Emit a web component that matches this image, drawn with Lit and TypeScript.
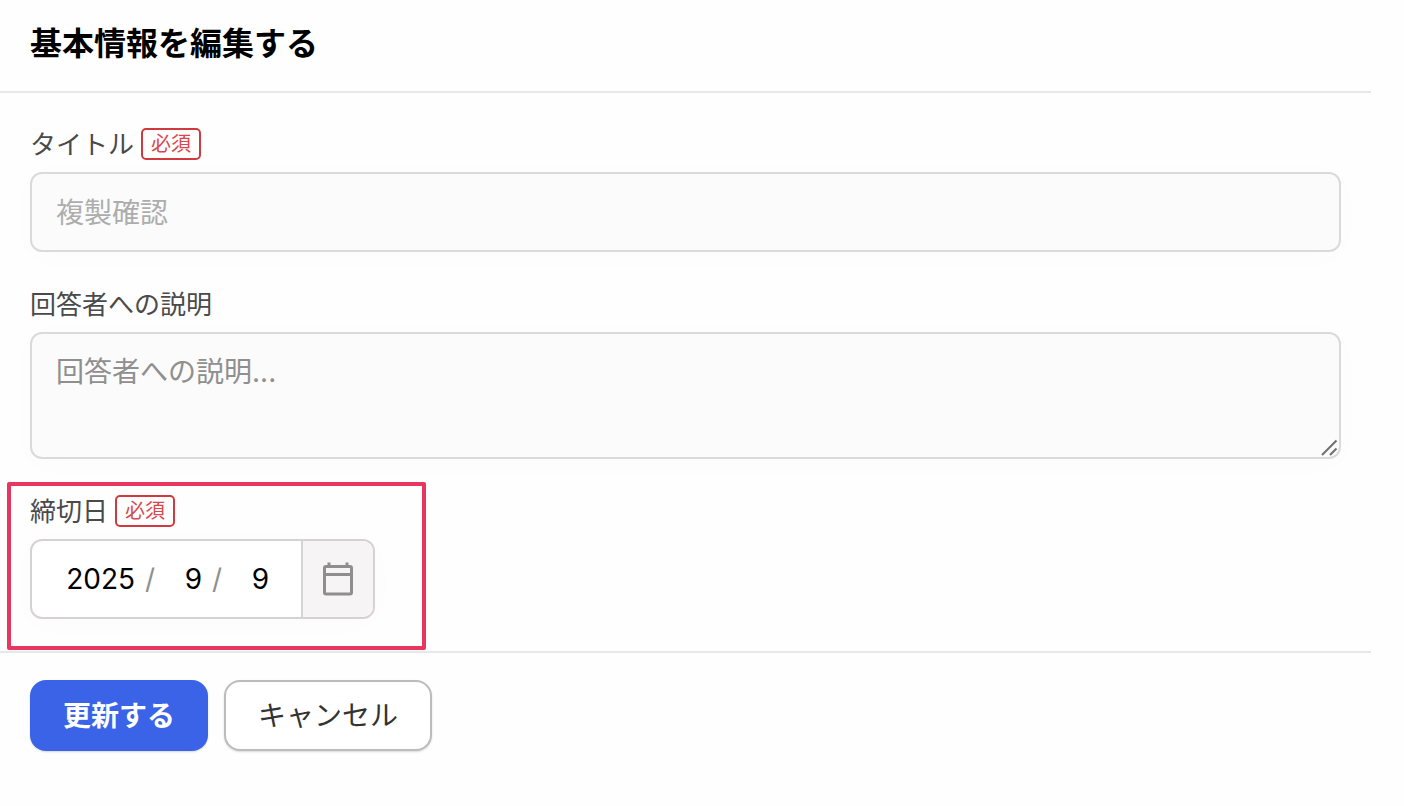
import { LitElement, html, css } from "lit";
import { customElement } from "lit/decorators.js";

@customElement("app-root")
export class AppRoot extends LitElement {
  static styles = css`
    :host {
      display: block;
      min-height: 100vh;
      background: #fefefe;
      color: #000;
      font-family: Inter, "Noto Sans CJK JP", sans-serif;
    }
    * {
      box-sizing: border-box;
    }
    .panel {
      margin-right: 33px;
    }
    .header {
      padding: 20px 30px 23px;
      border-bottom: 2px solid #e8e8e8;
    }
    .heading {
      margin: 0;
      font-size: 32px;
      line-height: 48px;
      font-weight: 700;
    }
    .fields {
      display: flex;
      flex-direction: column;
      gap: 36px;
      padding: 35px 30px 32px;
      border-bottom: 2px solid #e8e8e8;
    }
    .field {
      display: flex;
      flex-direction: column;
      gap: 12px;
      position: relative;
    }
    .label-row {
      display: flex;
      align-items: center;
      gap: 7px;
      height: 32px;
    }
    .label {
      padding-top: 2px;
      font-size: 26px;
      line-height: 32px;
      color: #4a4a4a;
    }
    .required {
      padding: 0 8px;
      border: 2px solid #d0393e;
      border-radius: 5px;
      font-size: 20px;
      line-height: 28px;
      color: #d9484c;
    }
    .control {
      display: block;
      width: 100%;
      margin: 0;
      border: 2px solid #dadada;
      border-radius: 12px;
      background: #fbfbfb;
      box-shadow: 0 4px 32px rgba(0, 0, 0, 0.016);
      font: inherit;
      font-size: 28px;
      line-height: 40px;
      outline: none;
    }
    .text {
      height: 80px;
      padding: 17px 24px 19px;
      color: #adadad;
    }
    .area-wrap {
      position: relative;
    }
    .area {
      height: 127px;
      padding: 18px 24px;
      resize: none;
    }
    .area::placeholder {
      color: #8f8f8f;
      opacity: 1;
    }
    .grip {
      position: absolute;
      right: 2px;
      bottom: 2px;
      width: 18px;
      height: 18px;
      pointer-events: none;
    }
    .date {
      display: flex;
      align-self: flex-start;
      height: 80px;
      border: 2px solid #d6d2d3;
      border-radius: 12px;
      background: #fff;
      box-shadow: 0 4px 32px rgba(0, 0, 0, 0.016);
      overflow: hidden;
    }
    .parts {
      display: flex;
      align-items: center;
      padding: 0 32px 0 24px;
      font-size: 28px;
      line-height: 40px;
    }
    .part {
      padding: 0;
      border: 0;
      background: none;
      font: inherit;
      color: #000;
      text-align: right;
      outline: none;
    }
    .year {
      width: 79px;
    }
    .short {
      width: 46px;
    }
    .slash {
      width: 21px;
      padding-left: 10px;
      color: #8f8f8f;
    }
    .picker {
      display: flex;
      align-items: center;
      justify-content: center;
      width: 72px;
      padding: 0;
      border: 0;
      border-left: 2px solid #d6d2d3;
      background: #f6f4f5;
    }
    .calendar {
      width: 32px;
      height: 36px;
    }
    .highlight {
      position: absolute;
      top: -13px;
      left: -23px;
      width: 419px;
      height: 168px;
      border: 4px solid #e8365f;
      border-radius: 2px;
      pointer-events: none;
    }
    .actions {
      display: flex;
      gap: 16px;
      padding: 27px 30px;
    }
    .button {
      height: 71px;
      border-radius: 16px;
      font: inherit;
      font-size: 28px;
      line-height: 40px;
    }
    .primary {
      padding: 0 33px;
      border: 0;
      background: #3a63e8;
      color: #fff;
      font-weight: 700;
      box-shadow: 0 1px 2px rgba(0, 0, 0, 0.15);
    }
    .secondary {
      padding: 0 32px;
      border: 2px solid #bdbbbc;
      background: #fff;
      color: #333;
      box-shadow: 0 1px 2px rgba(0, 0, 0, 0.15);
    }
  `;

  render() {
    return html`
      <main class="panel">
        <header class="header">
          <h1 class="heading">基本情報を編集する</h1>
        </header>
        <form @submit=${(e: Event) => e.preventDefault()}>
          <div class="fields">
            <div class="field">
              <div class="label-row">
                <label class="label" for="title">タイトル</label>
                <span class="required">必須</span>
              </div>
              <input class="control text" id="title" type="text" .value=${"複製確認"} />
            </div>

            <div class="field">
              <div class="label-row">
                <label class="label" for="description">回答者への説明</label>
              </div>
              <div class="area-wrap">
                <textarea class="control area" id="description" placeholder="回答者への説明..."></textarea>
                <svg class="grip" viewBox="0 0 18 18" fill="none" stroke="#6f6f6f" stroke-width="2" aria-hidden="true">
                  <path d="M1 16L15.500 1.500M9 16L15.500 9.500" />
                </svg>
              </div>
            </div>

            <div class="field">
              <div class="label-row">
                <label class="label" for="year">締切日</label>
                <span class="required">必須</span>
              </div>
              <div class="date">
                <div class="parts">
                  <input class="part year" id="year" inputmode="numeric" aria-label="年" .value=${"2025"} />
                  <span class="slash">/</span>
                  <input class="part short" inputmode="numeric" aria-label="月" .value=${"9"} />
                  <span class="slash">/</span>
                  <input class="part short" inputmode="numeric" aria-label="日" .value=${"9"} />
                </div>
                <button class="picker" type="button" aria-label="カレンダー">
                  <svg class="calendar" viewBox="0 0 32 36" fill="none" stroke="#8f8d8e" stroke-width="3" aria-hidden="true">
                    <rect x="2.500" y="5.500" width="27" height="27.500" rx="1.500" />
                    <path d="M2.500 13.500H29.500M7 5.500V1.500M25 5.500V1.500" />
                  </svg>
                </button>
              </div>
              <div class="highlight"></div>
            </div>
          </div>

          <div class="actions">
            <button class="button primary" type="submit">更新する</button>
            <button class="button secondary" type="button">キャンセル</button>
          </div>
        </form>
      </main>
    `;
  }
}
